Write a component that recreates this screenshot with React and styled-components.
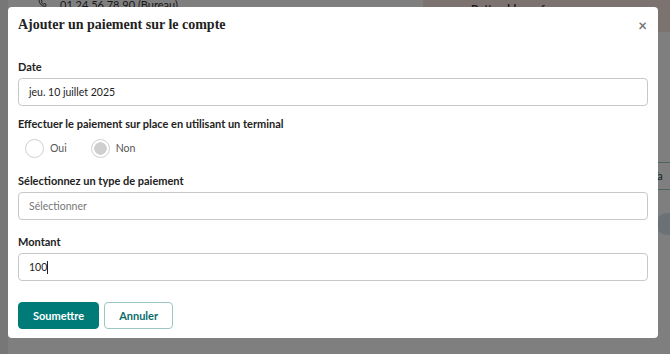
import React from 'react';
import styled, { createGlobalStyle } from 'styled-components';

const GlobalStyle = createGlobalStyle`
  html, body {
    margin: 0;
    padding: 0;
    width: 670px;
    height: 354px;
    overflow: hidden;
    background: #ffffff;
    font-family: Lato, "Noto Sans", sans-serif;
  }
`;

export default function App() {
  return (
    <>
      <GlobalStyle />
      <Page>
        <Sidebar />
        <Content>
          <TopRow>
            <Phone>
              <svg width="9" height="10" viewBox="0 0 24 24" fill="none" stroke="#333" strokeWidth="2.4">
                <path d="M5 3h4l2 5-2.5 1.5a11 11 0 0 0 6 6L16 13l5 2v4a2 2 0 0 1-2 2A16 16 0 0 1 3 5a2 2 0 0 1 2-2" />
              </svg>
              01 24 56 78 90 (Bureau)
            </Phone>
            <PinkPanel>Button bleu ref</PinkPanel>
          </TopRow>
          <SideList>
            <SideLine />
            <SideText>Ta</SideText>
            <SideLine />
            <SideDot />
          </SideList>
        </Content>
      </Page>
      <Overlay />
      <Modal>
        <Header>
          <Title>Ajouter un paiement sur le compte</Title>
          <Close>×</Close>
        </Header>
        <Body>
          <Field top={17}>
            <Label>Date</Label>
            <Input>jeu. 10 juillet 2025</Input>
          </Field>
          <Field top={11}>
            <Label>Effectuer le paiement sur place en utilisant un terminal</Label>
            <Radios>
              <Radio>
                <Circle />
                Oui
              </Radio>
              <Radio>
                <Circle checked />
                Non
              </Radio>
            </Radios>
          </Field>
          <Field top={13}>
            <Label>Sélectionnez un type de paiement</Label>
            <Input placeholder>Sélectionner</Input>
          </Field>
          <Field top={15}>
            <Label>Montant</Label>
            <Input>100<Caret /></Input>
          </Field>
        </Body>
        <Footer>
          <Button primary>Soumettre</Button>
          <Button>Annuler</Button>
        </Footer>
      </Modal>
    </>
  );
}

const Page = styled.div`
  display: flex;
  width: 670px;
  height: 354px;
`;

const Sidebar = styled.div`
  width: 8px;
  background: #eeeeee;
`;

const Content = styled.div`
  flex: 1;
  display: flex;
  flex-direction: column;
`;

const TopRow = styled.div`
  display: flex;
  height: 32px;
`;

const Phone = styled.div`
  flex: 1;
  display: flex;
  align-items: flex-start;
  gap: 13px;
  padding-left: 30px;
  margin-top: -2px;
  font-size: 11px;
  color: #333;
`;

const PinkPanel = styled.div`
  width: 247px;
  background: #f8e6e3;
  font-size: 11px;
  font-weight: 700;
  color: #333;
  padding: 2px 0 0 48px;
  box-sizing: border-box;
`;

const SideList = styled.div`
  display: flex;
  flex-direction: column;
  align-items: flex-end;
  padding-top: 130px;
`;

const SideLine = styled.div`
  width: 12px;
  height: 1px;
  background: #9cc3c2;
`;

const SideText = styled.div`
  width: 12px;
  height: 26px;
  line-height: 26px;
  font-size: 11px;
  color: #1d4f4e;
  text-indent: -6px;
  overflow: hidden;
`;

const SideDot = styled.div`
  width: 14px;
  height: 22px;
  margin-top: 23px;
  border-radius: 11px 0 0 11px;
  background: #d7e3ec;
`;

const Overlay = styled.div`
  position: fixed;
  inset: 0;
  background: rgba(0, 0, 0, 0.5);
`;

const Modal = styled.div`
  position: fixed;
  top: 7px;
  left: 8px;
  width: 650px;
  height: 331px;
  background: #ffffff;
  border-radius: 4px;
  box-sizing: border-box;
  padding: 0 10px;
  display: flex;
  flex-direction: column;
`;

const Header = styled.div`
  display: flex;
  align-items: center;
  justify-content: space-between;
  height: 36px;
`;

const Title = styled.h2`
  margin: 0;
  font-family: "Liberation Serif", "DejaVu Serif", serif;
  font-weight: 700;
  font-size: 14px;
  color: #222;
`;

const Close = styled.span`
  font-size: 15px;
  font-weight: 700;
  color: #777;
  margin-right: 1px;
`;

const Body = styled.div`
  display: flex;
  flex-direction: column;
`;

const Field = styled.div`
  display: flex;
  flex-direction: column;
  gap: 4px;
  margin-top: ${p => p.top}px;
`;

const Label = styled.label`
  font-size: 11px;
  font-weight: 700;
  color: #222;
  line-height: 14px;
`;

const Input = styled.div`
  height: 28px;
  box-sizing: border-box;
  border: 1px solid #c8c8c8;
  border-radius: 4px;
  display: flex;
  align-items: center;
  padding-left: 10px;
  font-size: 10.5px;
  color: ${p => (p.placeholder ? '#777' : '#222')};
`;

const Caret = styled.span`
  display: inline-block;
  width: 1px;
  height: 13px;
  background: #222;
`;

const Radios = styled.div`
  display: flex;
  gap: 24px;
  padding-left: 7px;
  height: 26px;
  align-items: center;
`;

const Radio = styled.div`
  display: flex;
  align-items: center;
  gap: 6px;
  font-size: 10.5px;
  color: #555;
`;

const Circle = styled.span`
  width: 19px;
  height: 19px;
  box-sizing: border-box;
  border-radius: 50%;
  border: 1px solid #cfcfcf;
  background: ${p => (p.checked ? 'radial-gradient(circle, #cfcfcf 0 6px, #fff 6.5px)' : '#fff')};
`;

const Footer = styled.div`
  display: flex;
  gap: 5px;
  margin-top: 21px;
`;

const Button = styled.button`
  height: 27px;
  padding: 0 14px;
  border-radius: 4px;
  font-family: Lato, "Noto Sans", sans-serif;
  font-size: 11px;
  font-weight: 700;
  border: 1px solid ${p => (p.primary ? '#007b78' : '#9cc6c4')};
  background: ${p => (p.primary ? '#007b78' : '#ffffff')};
  color: ${p => (p.primary ? '#ffffff' : '#0b6c6a')};
`;
